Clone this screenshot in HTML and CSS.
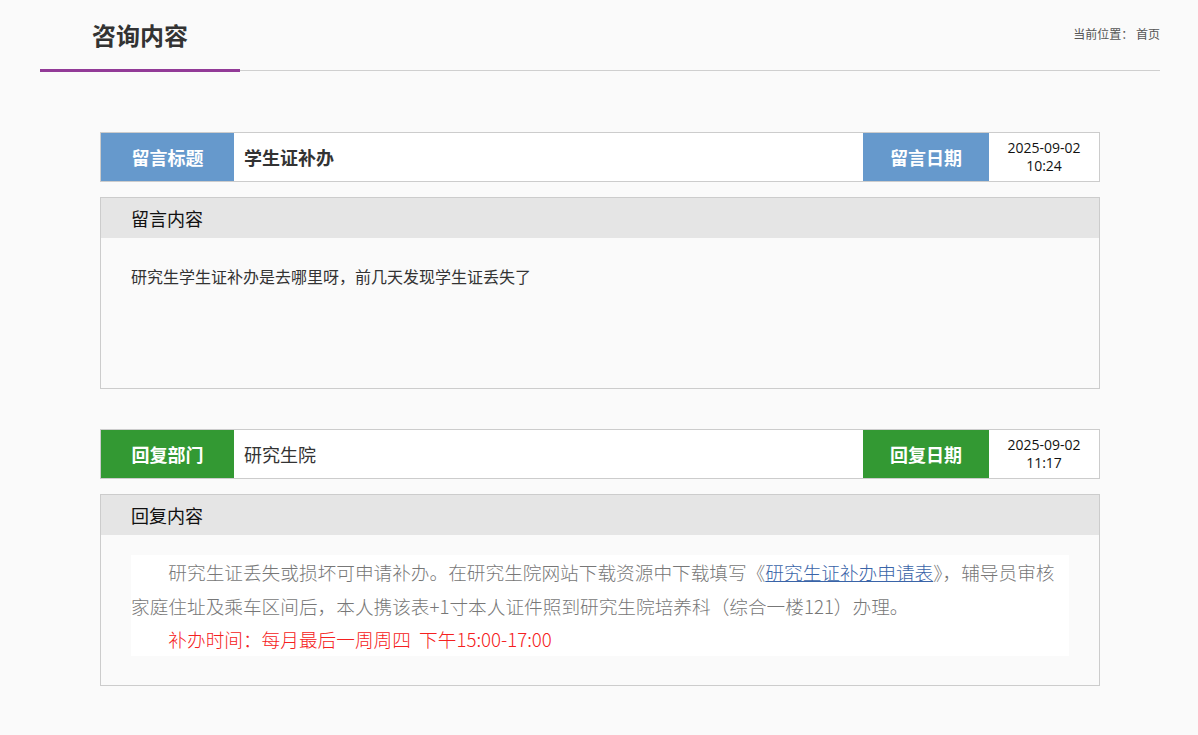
FILE: index.html
```html
<!DOCTYPE html>
<html lang="zh-CN">
<head>
<meta charset="utf-8">
<title>咨询内容</title>
<link rel="stylesheet" href="styles.css">
</head>
<body>
<div class="page">
  <header class="page-head">
    <h1 class="page-title">咨询内容</h1>
    <div class="crumb">当前位置：&nbsp;<span class="crumb-home">首页</span></div>
  </header>

  <main class="detail">
    <div class="info-row">
      <div class="label label-blue">留言标题</div>
      <div class="value value-title">学生证补办</div>
      <div class="label label-blue label-date">留言日期</div>
      <div class="date"><span class="date-line">2025-09-02</span><span class="date-line">10:24</span></div>
    </div>
    <section class="box box-msg">
      <div class="box-head">留言内容</div>
      <div class="box-body">
        <p class="msg-text">研究生学生证补办是去哪里呀，前几天发现学生证丢失了</p>
      </div>
    </section>

    <div class="info-row info-row-reply">
      <div class="label label-green">回复部门</div>
      <div class="value">研究生院</div>
      <div class="label label-green label-date">回复日期</div>
      <div class="date"><span class="date-line">2025-09-02</span><span class="date-line">11:17</span></div>
    </div>
    <section class="box box-reply">
      <div class="box-head">回复内容</div>
      <div class="box-body reply-body">
        <div class="reply-card">
          <p class="reply-text">研究生证丢失或损坏可申请补办。在研究生院网站下载资源中下载填写《<a class="reply-link" href="#">研究生证补办申请表</a>》，辅导员审核家庭住址及乘车区间后，本人携该表+1寸本人证件照到研究生院培养科（综合一楼121）办理。</p>
          <p class="reply-text reply-red">补办时间：每月最后一周周四&nbsp;&nbsp;下午15:00-17:00</p>
        </div>
      </div>
    </section>
  </main>
</div>
</body>
</html>
```

FILE: styles.css
```css
* { box-sizing: border-box; }

html, body {
  margin: 0;
  padding: 0;
  background: #fafafa;
  font-family: "Microsoft YaHei", "Noto Sans CJK SC", "Noto Sans", sans-serif;
  color: #333;
}

.page {
  width: 1120px;
  margin: 0 38px 0 40px;
  padding-bottom: 40px;
}

.page-head {
  position: relative;
  height: 71px;
  border-bottom: 1px solid #cfcfcf;
  display: flex;
  align-items: center;
  justify-content: space-between;
  padding: 0 0 0 52px;
}

.page-head::after {
  content: "";
  position: absolute;
  left: 0;
  bottom: -2px;
  width: 200px;
  height: 3px;
  background: #923a97;
}

.page-title {
  margin: 0;
  font-size: 24px;
  font-weight: bold;
  color: #333;
  line-height: 32px;
  padding-bottom: 1px;
}

.crumb {
  font-size: 12px;
  color: #555;
  line-height: 16px;
  padding-bottom: 2px;
}

.detail {
  width: 1000px;
  margin: 61px 0 0 60px;
}

.info-row {
  display: flex;
  height: 50px;
  border: 1px solid #cccccc;
  background: #fff;
}

.info-row-reply { margin-top: 40px; }

.label {
  width: 133px;
  flex: 0 0 133px;
  display: flex;
  align-items: center;
  justify-content: center;
  color: #fff;
  font-size: 18px;
  font-weight: bold;
}

.label-date {
  width: 126px;
  flex: 0 0 126px;
}

.label-blue { background: #6699cc; }
.label-green { background: #339933; }

.value {
  flex: 1;
  display: flex;
  align-items: center;
  padding-left: 10px;
  font-size: 18px;
  color: #333;
}

.value-title { font-weight: bold; }

.date {
  width: 110px;
  flex: 0 0 110px;
  display: flex;
  flex-direction: column;
  align-items: center;
  justify-content: center;
  text-align: center;
  font-family: "Open Sans", "Noto Sans", sans-serif;
  font-size: 14px;
  color: #111;
}

.date-line {
  display: block;
  line-height: 18px;
}

.box {
  margin-top: 15px;
  border: 1px solid #cccccc;
}

.box-head {
  height: 40px;
  background: #e5e5e5;
  padding-left: 30px;
  display: flex;
  align-items: center;
  font-size: 18px;
  color: #111;
}

.box-body {
  padding: 27px 30px 0;
}

.box-msg .box-body { height: 150px; }

.msg-text {
  margin: 0;
  font-size: 16px;
  line-height: 22px;
  color: #333;
}

.reply-body {
  padding: 20px 30px 29px;
}

.reply-card {
  background: #fff;
}

.reply-text {
  margin: 0;
  font-size: 18.67px;
  line-height: 33.6px;
  text-indent: 2em;
  color: #777;
  font-family: "SimSun", "Noto Sans CJK SC", serif;
  font-weight: 300;
}

.reply-link {
  color: #3a64a8;
  text-decoration: underline;
}

.reply-red { color: #f52020; }
```
